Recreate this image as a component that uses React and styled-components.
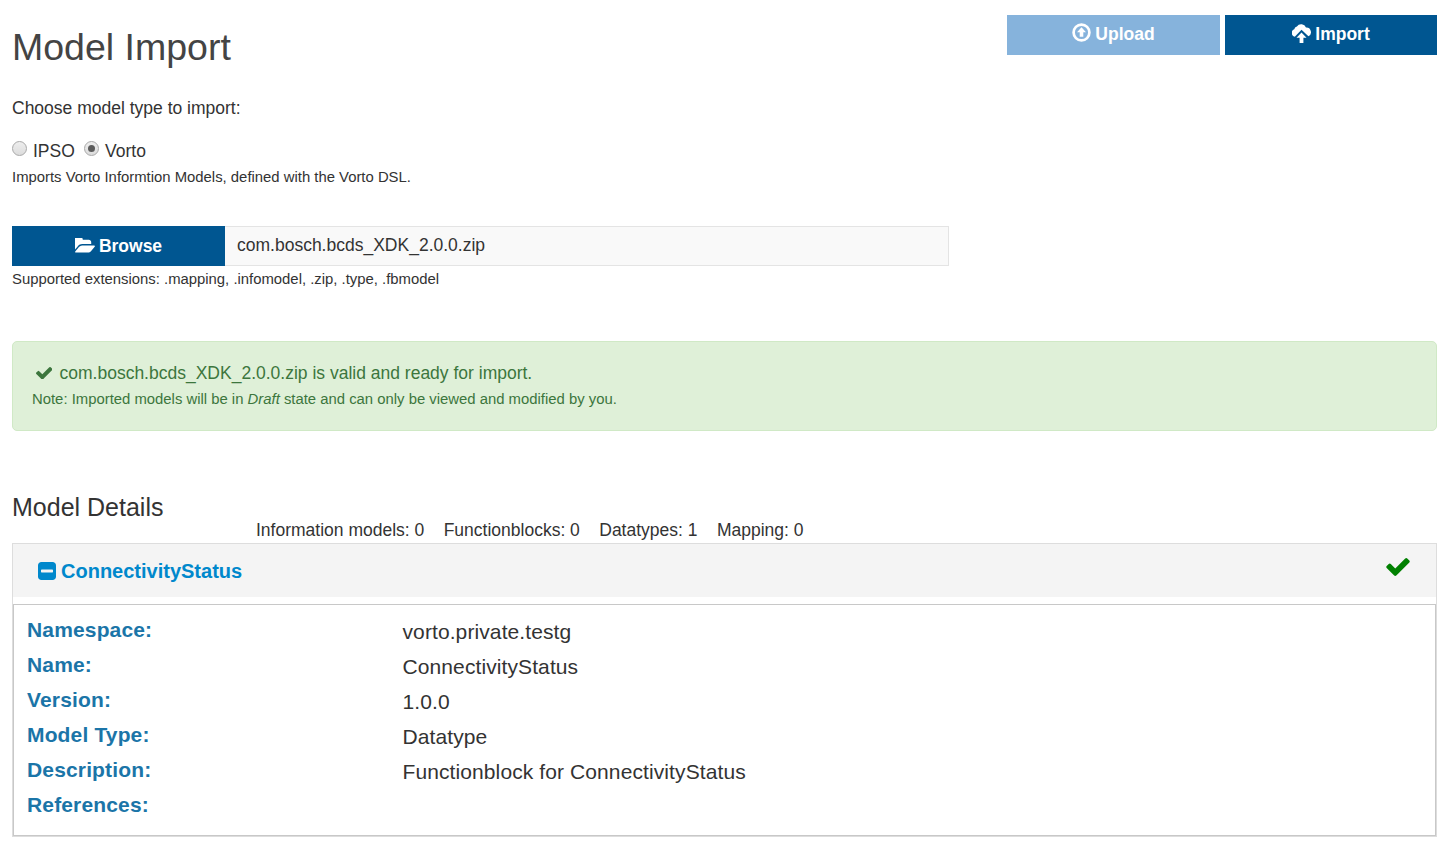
import React from 'react';
import styled, { createGlobalStyle } from 'styled-components';

const Global = createGlobalStyle`
  *, *::before, *::after { box-sizing: border-box; }
  body {
    margin: 0;
    background: #fff;
    color: #333;
    font: 17.5px/25px "Liberation Sans", Arial, sans-serif;
  }
  h1, h2, p, dl, dd, dt { margin: 0; font-weight: 400; }
`;

const Page = styled.main`
  display: flex;
  flex-direction: column;
  height: 843px;
  padding: 15px 13px 0 12px;
`;

const Header = styled.header`
  display: flex;
  justify-content: space-between;
  align-items: flex-start;
  height: 81px;
`;

const Title = styled.h1`
  padding-top: 10px;
  font-size: 37.5px;
  line-height: 44px;
  color: #444;
`;

const Actions = styled.div`
  display: flex;
  gap: 5px;
`;

const Button = styled.button`
  display: flex;
  justify-content: center;
  align-items: center;
  gap: 4px;
  width: ${({ $width }) => $width || 213}px;
  height: 40px;
  padding: 0 0 ${({ $lift }) => $lift || 0}px;
  border: 0;
  background: ${({ $muted }) => ($muted ? '#86b3dc' : '#005691')};
  color: #fff;
  font: bold 17.5px/25px "Liberation Sans", Arial, sans-serif;
`;

const Icon = styled.svg`
  flex: none;
  width: ${({ $w }) => $w}px;
  height: ${({ $h, $w }) => $h || $w}px;
  margin-top: ${({ $top }) => $top || 0}px;
  fill: currentColor;
`;

const Choices = styled.div`
  display: flex;
  margin-top: 18px;
`;

const Choice = styled.label`
  display: flex;
  align-items: flex-start;
  gap: 6px;
  width: ${({ $width }) => $width}px;
`;

const Radio = styled.span`
  display: grid;
  place-items: center;
  width: 15px;
  height: 15px;
  margin-top: 2px;
  border: 1px solid #a9a9a9;
  border-radius: 50%;
  background: linear-gradient(#eee, #dcdcdc);

  &::after {
    content: "";
    width: 7px;
    height: 7px;
    border-radius: 50%;
    background: ${({ $on }) => ($on ? '#5c5c5c' : 'transparent')};
  }
`;

const Hint = styled.p`
  font-size: 14.875px;
  line-height: 21px;
  padding-top: 3px;
`;

const FilePicker = styled.div`
  display: flex;
  width: 937px;
  margin-top: 38px;
`;

const FileName = styled.div`
  flex: 1;
  height: 40px;
  padding: 6px 12px;
  border: 1px solid #e4e4e4;
  border-left: 0;
  background: #f9f9f9;
`;

const Alert = styled.section`
  height: 90px;
  margin-top: 51px;
  padding: 19px 19px 0;
  border: 1px solid #d0e9c6;
  border-radius: 5px;
  background: #dff0d8;
  color: #3c763d;
`;

const AlertLine = styled.p`
  display: flex;
  gap: 7.5px;
  padding-left: 3.5px;
`;

const SectionTitle = styled.h2`
  margin-top: 62px;
  font-size: 25px;
  line-height: 28px;
`;

const Counts = styled.div`
  display: flex;
  gap: 19.4px;
  height: 22px;
  padding-left: 244px;
  line-height: 19px;
`;

const Panel = styled.section`
  border: 1px solid #ddd;
`;

const PanelHeader = styled.div`
  display: flex;
  justify-content: space-between;
  height: 53px;
  margin-bottom: 7px;
  padding: 14px 26.5px 0 25px;
  background: #f4f4f4;
`;

const ModelLink = styled.a`
  display: flex;
  gap: 5px;
  padding-top: 1px;
  color: #0088cc;
  font-size: 20px;
  font-weight: 700;
`;

const Ready = styled.span`
  color: green;
`;

const Details = styled.dl`
  height: 232px;
  padding: 10px 13px;
  border: 1px solid #c8c8c8;
`;

const Row = styled.div`
  display: grid;
  grid-template-columns: 375.5px 1fr;
  height: 35px;
  font-size: 21px;
`;

const Term = styled.dt`
  line-height: 30px;
  letter-spacing: 0.15px;
  color: #1b75a8;
  font-weight: 700 !important;
`;

const Value = styled.dd`
  line-height: 34px;
  letter-spacing: 0.1px;
`;

const PATHS = {
  check: 'M1671 566q0 40-28 68l-724 724-136 136q-28 28-68 28t-68-28l-136-136-362-362q-28-28-28-68t28-68l136-136q28-28 68-28t68 28l294 295 656-657q28-28 68-28t68 28l136 136q28 28 28 68z',
  minus: 'M1408 960v-128q0-26-19-45t-45-19h-896q-26 0-45 19t-19 45v128q0 26 19 45t45 19h896q26 0 45-19t19-45zm256-544v960q0 119-84.5 203.5t-203.5 84.5h-960q-119 0-203.5-84.5t-84.5-203.5v-960q0-119 84.5-203.5t203.5-84.5h960q119 0 203.5 84.5t84.5 203.5z',
  folder: 'M1815 952q0 31-31 66l-336 396q-43 51-120.5 86.5t-143.5 35.5h-1088q-34 0-60.5-13t-26.5-43q0-31 31-66l336-396q43-51 120.5-86.5t143.5-35.5h1088q34 0 60.5 13t26.5 43zm-343-344v160h-832q-94 0-197 47.5t-164 119.5l-337 396-5 6q0-4-.5-12.5t-.5-12.5v-960q0-92 66-158t158-66h320q92 0 158 66t66 158v32h544q92 0 158 66t66 158z',
};

const Check = (props) => (
  <Icon viewBox="121 334 1550 1188" {...props}><path d={PATHS.check} /></Icon>
);

const details = [
  ['Namespace:', 'vorto.private.testg'],
  ['Name:', 'ConnectivityStatus'],
  ['Version:', '1.0.0'],
  ['Model Type:', 'Datatype'],
  ['Description:', 'Functionblock for ConnectivityStatus'],
  ['References:', ''],
];

const counts = ['Information models: 0', 'Functionblocks: 0', 'Datatypes: 1', 'Mapping: 0'];

export default function App() {
  return (
    <Page>
      <Global />
      <Header>
        <Title>Model Import</Title>
        <Actions>
          <Button $muted $lift={1}>
            <Icon $w={19} $top={-4} viewBox="0 0 19 19">
              <circle cx="9.5" cy="9.5" r="7.9" fill="none" stroke="currentColor" strokeWidth="2.7" />
              <path d="M9.5 4.2 14 9.2h-2.7v4.6H7.7V9.2H5z" />
            </Icon>
            Upload
          </Button>
          <Button $width={212} $lift={1}>
            <Icon $w={19} $top={-2} viewBox="0 0 19 19">
              <path d="M2.8 12.7A3.9 3.9 0 0 1 2.3 5.2 3.2 3.2 0 0 1 4.9 2.4 5.2 5.2 0 0 1 14 3.6 4.6 4.6 0 0 1 16.4 12.3L9.5 5.8z" />
              <path d="M9.5 8.6 14.5 13.7h-3.1V19H7.6v-5.3H4.5z" />
            </Icon>
            Import
          </Button>
        </Actions>
      </Header>
      <p>Choose model type to import:</p>
      <Choices>
        <Choice $width={72}><Radio />IPSO</Choice>
        <Choice $width={80}><Radio $on />Vorto</Choice>
      </Choices>
      <Hint>Imports Vorto Informtion Models, defined with the Vorto DSL.</Hint>
      <FilePicker>
        <Button>
          <Icon $w={20} $h={15} $top={-2} viewBox="0 256 1815 1280"><path d={PATHS.folder} /></Icon>
          Browse
        </Button>
        <FileName>com.bosch.bcds_XDK_2.0.0.zip</FileName>
      </FilePicker>
      <Hint>Supported extensions: .mapping, .infomodel, .zip, .type, .fbmodel</Hint>
      <Alert>
        <AlertLine><Check $w={16.5} $h={12.6} $top={5.5} />com.bosch.bcds_XDK_2.0.0.zip is valid and ready for import.</AlertLine>
        <Hint>Note: Imported models will be in <em>Draft</em> state and can only be viewed and modified by you.</Hint>
      </Alert>
      <SectionTitle>Model Details</SectionTitle>
      <Counts>{counts.map((text) => <span key={text}>{text}</span>)}</Counts>
      <Panel>
        <PanelHeader>
          <ModelLink>
            <Icon $w={18} $top={3} viewBox="128 128 1536 1536"><path d={PATHS.minus} /></Icon>
            ConnectivityStatus
          </ModelLink>
          <Ready><Check $w={24} $h={18} /></Ready>
        </PanelHeader>
        <Details>
          {details.map(([term, value]) => (
            <Row key={term}><Term>{term}</Term><Value>{value}</Value></Row>
          ))}
        </Details>
      </Panel>
    </Page>
  );
}
